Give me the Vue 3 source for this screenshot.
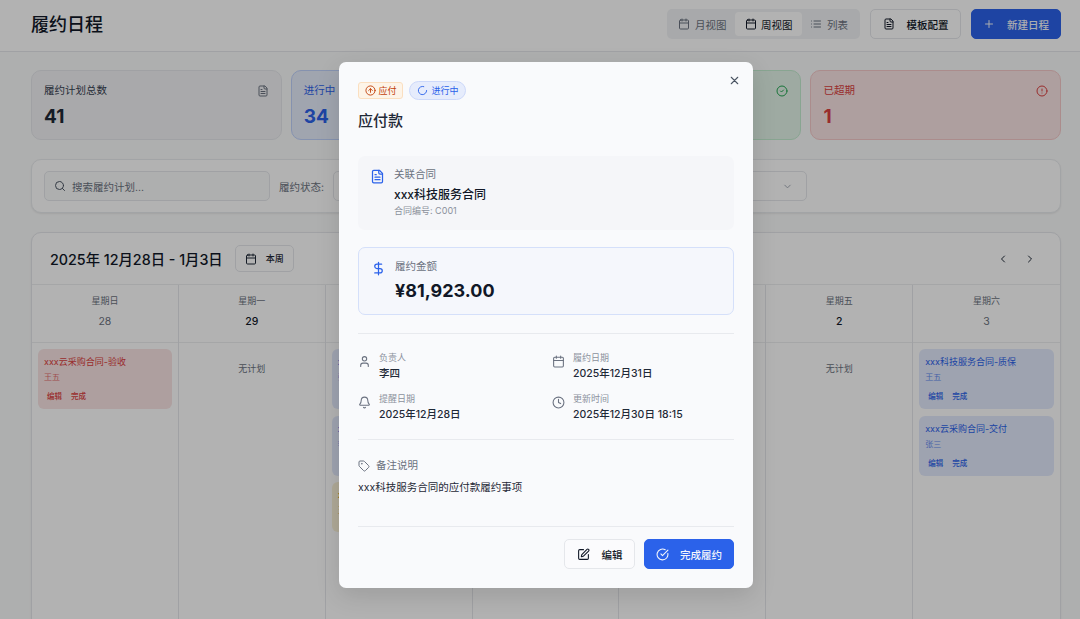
<script setup>
import { h } from 'vue'

const icons = {
  calendar: '<rect x="3" y="4" width="18" height="18" rx="2"/><path d="M16 2v4M8 2v4M3 10h18"/>',
  file: '<path d="M15 2H6a2 2 0 0 0-2 2v16a2 2 0 0 0 2 2h12a2 2 0 0 0 2-2V7Z"/><path d="M14 2v4a2 2 0 0 0 2 2h4M10 9H8M16 13H8M16 17H8"/>',
  list: '<path d="M8 6h13M8 12h13M8 18h13M3 6h.01M3 12h.01M3 18h.01"/>',
  plus: '<path d="M5 12h14M12 5v14"/>',
  search: '<circle cx="11" cy="11" r="8"/><path d="m21 21-4.3-4.3"/>',
  check: '<circle cx="12" cy="12" r="10"/><path d="m9 12 2 2 4-4"/>',
  alert: '<circle cx="12" cy="12" r="10"/><path d="M12 8v4M12 16h.01"/>',
  down: '<path d="m6 9 6 6 6-6"/>',
  left: '<path d="m15 18-6-6 6-6"/>',
  right: '<path d="m9 18 6-6-6-6"/>',
  close: '<path d="M18 6 6 18M6 6l12 12"/>',
  up: '<circle cx="12" cy="12" r="10"/><path d="m16 12-4-4-4 4M12 16V8"/>',
  loader: '<path d="M21 12a9 9 0 1 1-6.219-8.56"/>',
  dollar: '<path d="M12 2v20M17 5H9.5a3.5 3.5 0 0 0 0 7h5a3.5 3.5 0 0 1 0 7H6"/>',
  user: '<path d="M19 21v-2a4 4 0 0 0-4-4H9a4 4 0 0 0-4 4v2"/><circle cx="12" cy="7" r="4"/>',
  bell: '<path d="M10.268 21a2 2 0 0 0 3.464 0M3.262 15.326A1 1 0 0 0 4 17h16a1 1 0 0 0 .74-1.673C19.41 13.956 18 12.499 18 8A6 6 0 0 0 6 8c0 4.499-1.411 5.956-2.738 7.326"/>',
  clock: '<circle cx="12" cy="12" r="10"/><path d="M12 6v6l4 2"/>',
  tag: '<path d="M12.586 2.586A2 2 0 0 0 11.172 2H4a2 2 0 0 0-2 2v7.172a2 2 0 0 0 .586 1.414l8.704 8.704a2.426 2.426 0 0 0 3.42 0l6.58-6.58a2.426 2.426 0 0 0 0-3.42z"/><circle cx="7.5" cy="7.5" r=".5"/>',
  pen: '<path d="M12 3H5a2 2 0 0 0-2 2v14a2 2 0 0 0 2 2h14a2 2 0 0 0 2-2v-7"/><path d="M18.375 2.625a1 1 0 0 1 3 3l-9.013 9.014a2 2 0 0 1-.853.505l-2.873.84a.5.5 0 0 1-.62-.62l.84-2.873a2 2 0 0 1 .506-.852z"/>',
  done: '<path d="M21.801 10A10 10 0 1 1 17 3.335"/><path d="m9 11 3 3L22 4"/>',
}

// small inline icon, stroke follows currentColor
const Icon = (props) =>
  h('svg', {
    width: props.size || 12,
    height: props.size || 12,
    viewBox: '0 0 24 24',
    fill: 'none',
    stroke: 'currentColor',
    'stroke-width': 2,
    'stroke-linecap': 'round',
    'stroke-linejoin': 'round',
    style: { flex: 'none', display: 'block' },
    innerHTML: icons[props.name],
  })
Icon.props = ['name', 'size']

const stats = [
  { label: '履约计划总数', value: '41', icon: 'file', tone: 'gray' },
  { label: '进行中', value: '34', icon: 'loader', tone: 'blue' },
  { label: '已完成', value: '6', icon: 'check', tone: 'green' },
  { label: '已超期', value: '1', icon: 'alert', tone: 'red' },
]

const days = [
  { name: '星期日', date: '28', muted: true, events: [{ title: 'xxx云采购合同-验收', who: '王五', tone: 'red' }] },
  { name: '星期一', date: '29', events: [] },
  {
    name: '星期二',
    date: '30',
    events: [
      { title: 'xxx科技服务合同-交付', who: '张三', tone: 'blue' },
      { title: 'xxx科技服务合同-验收', who: '李四', tone: 'blue' },
      { title: 'xxx云采购合同-付款', who: '王五', tone: 'yellow' },
    ],
  },
  { name: '星期三', date: '31', events: [] },
  { name: '星期四', date: '1', events: [] },
  { name: '星期五', date: '2', events: [] },
  {
    name: '星期六',
    date: '3',
    muted: true,
    events: [
      { title: 'xxx科技服务合同-质保', who: '王五', tone: 'blue' },
      { title: 'xxx云采购合同-交付', who: '张三', tone: 'blue' },
    ],
  },
]

const infoItems = [
  { label: '负责人', value: '李四', icon: 'user' },
  { label: '履约日期', value: '2025年12月31日', icon: 'calendar' },
  { label: '提醒日期', value: '2025年12月28日', icon: 'bell' },
  { label: '更新时间', value: '2025年12月30日 18:15', icon: 'clock' },
]
</script>

<template>
  <div class="page">
    <header class="topbar">
      <h1 class="topbar__title">履约日程</h1>
      <div class="topbar__actions">
        <div class="tabs">
          <span class="tab"><Icon name="calendar" :size="12" />月视图</span>
          <span class="tab tab--active"><Icon name="calendar" :size="12" />周视图</span>
          <span class="tab tab--last"><Icon name="list" :size="12" />列表</span>
        </div>
        <button class="btn btn--template"><Icon name="file" :size="12" />模板配置</button>
        <button class="btn btn--primary btn--new"><Icon name="plus" :size="12" />新建日程</button>
      </div>
    </header>

    <main class="content">
      <section class="stats">
        <div v-for="s in stats" :key="s.label" class="stat" :class="'stat--' + s.tone">
          <div class="stat__top">
            <span>{{ s.label }}</span>
            <Icon :name="s.icon" :size="12" />
          </div>
          <div class="stat__value">{{ s.value }}</div>
        </div>
      </section>

      <section class="filters">
        <div class="search"><Icon name="search" :size="12" />搜索履约计划...</div>
        <span class="filters__label">履约状态:</span>
        <div class="select"><Icon name="down" :size="11" /></div>
      </section>

      <section class="calendar">
        <div class="calendar__head">
          <div class="calendar__range">2025年 12月28日 - 1月3日</div>
          <button class="today"><Icon name="calendar" :size="12" />本周</button>
          <div class="calendar__nav">
            <Icon name="left" :size="12" />
            <Icon name="right" :size="12" />
          </div>
        </div>
        <div class="week">
          <div v-for="d in days" :key="d.name" class="day">
            <div class="day__head">
              <div class="day__name">{{ d.name }}</div>
              <div class="day__date" :class="{ 'day__date--muted': d.muted }">{{ d.date }}</div>
            </div>
            <div class="day__body">
              <div v-if="!d.events.length" class="day__empty">无计划</div>
              <div v-for="e in d.events" :key="e.title" class="event" :class="'event--' + e.tone">
                <div class="event__title">{{ e.title }}</div>
                <div class="event__who">{{ e.who }}</div>
                <div v-if="e.tone !== 'yellow'" class="event__links"><span>编辑</span><span>完成</span></div>
              </div>
            </div>
          </div>
        </div>
      </section>
    </main>

    <div class="overlay">
      <div class="modal">
        <button class="modal__close"><Icon name="close" :size="13" /></button>
        <div class="chips">
          <span class="chip chip--orange"><Icon name="up" :size="11" />应付</span>
          <span class="chip chip--blue"><Icon name="loader" :size="11" />进行中</span>
        </div>
        <h2 class="modal__title">应付款</h2>

        <div class="contract">
          <span class="contract__icon"><Icon name="file" :size="15" /></span>
          <div>
            <div class="contract__label">关联合同</div>
            <div class="contract__name">xxx科技服务合同</div>
            <div class="contract__no">合同编号: C001</div>
          </div>
        </div>

        <div class="amount">
          <span class="amount__icon"><Icon name="dollar" :size="15" /></span>
          <div>
            <div class="amount__label">履约金额</div>
            <div class="amount__value">¥81,923.00</div>
          </div>
        </div>

        <div class="info">
          <div v-for="item in infoItems" :key="item.label" class="info__item">
            <span class="info__icon"><Icon :name="item.icon" :size="13" /></span>
            <div>
              <div class="info__label">{{ item.label }}</div>
              <div class="info__value">{{ item.value }}</div>
            </div>
          </div>
        </div>

        <div class="note">
          <div class="note__label"><Icon name="tag" :size="12" />备注说明</div>
          <div class="note__text">xxx科技服务合同的应付款履约事项</div>
        </div>

        <div class="modal__footer">
          <button class="btn btn--edit"><Icon name="pen" :size="13" />编辑</button>
          <button class="btn btn--primary btn--finish"><Icon name="done" :size="13" />完成履约</button>
        </div>
      </div>
    </div>
  </div>
</template>

<style scoped>
.page {
  position: relative;
  height: 619px;
  overflow: hidden;
  background: #fafbfb;
  font-family: Inter, "Noto Sans CJK SC", sans-serif;
  color: #111827;
}

button {
  font-family: inherit;
  cursor: pointer;
}

.topbar {
  display: flex;
  align-items: center;
  justify-content: space-between;
  height: 52px;
  padding: 0 19px 3px 31px;
  box-sizing: border-box;
  border-bottom: 1px solid #e5e7eb;
  background: #fff;
}

.topbar__title {
  margin: 2px 0 0;
  font-size: 18px;
  line-height: 24px;
  font-weight: 500;
}

.topbar__actions {
  display: flex;
  align-items: center;
  gap: 10px;
}

.tabs {
  display: flex;
  align-items: center;
  height: 30px;
  padding: 0 3px;
  box-sizing: border-box;
  border-radius: 5px;
  background: #f1f3f5;
}

.tab {
  display: flex;
  align-items: center;
  gap: 5px;
  height: 24px;
  padding: 0 8.5px 0 8px;
  box-sizing: border-box;
  border-radius: 4px;
  font-size: 10.5px;
  color: #6b7280;
}

.tab--active {
  gap: 4px;
  padding: 0 9.5px 0 10px;
  background: #fff;
  color: #111827;
}

.tab--last {
  padding-right: 9px;
}

.btn {
  display: flex;
  align-items: center;
  justify-content: center;
  height: 30px;
  padding: 0;
  border: 1px solid #e5e7eb;
  border-radius: 5px;
  background: #fff;
  font-size: 10.5px;
  font-weight: 500;
  color: #111827;
  gap: 12px;
  width: 91px;
}

.btn--new {
  width: 90px;
}

.btn--primary {
  border-color: #2b62ea;
  background: #2b62ea;
  color: #f4f6fb;
}

.content {
  display: flex;
  flex-direction: column;
  gap: 19px;
  padding: 18px 19px 0 31px;
}

.stats {
  display: grid;
  grid-template-columns: repeat(4, 1fr);
  gap: 9.3px;
}

.stat {
  height: 70px;
  box-sizing: border-box;
  padding: 13px 12px 0;
  border: 1px solid #e5e7eb;
  border-radius: 10px;
  background: #f3f4f6;
}

.stat__top {
  display: flex;
  align-items: center;
  justify-content: space-between;
  font-size: 10.5px;
  line-height: 14px;
  font-weight: 400;
  color: #374151;
}

.stat__top svg {
  color: #6b7280;
}

.stat__value {
  margin-top: 6px;
  font-size: 19px;
  line-height: 26px;
  font-weight: 700;
  color: #1f2937;
}

.stat--gray {
  background: #f3f3f5;
}

.stat--blue {
  border-color: #bfd2fb;
  background: #e6ecfb;
}

.stat--blue .stat__top,
.stat--blue .stat__top svg,
.stat--blue .stat__value {
  color: #2b62ea;
}

.stat--green {
  border-color: #c3ecd0;
  background: #e3f4e8;
}

.stat--green .stat__top,
.stat--green .stat__top svg,
.stat--green .stat__value {
  color: #22a652;
}

.stat--red {
  border-color: #f5c9c9;
  background: #f9e4e4;
}

.stat--red .stat__top,
.stat--red .stat__top svg,
.stat--red .stat__value {
  color: #dc4040;
}

.filters {
  display: flex;
  align-items: center;
  height: 54px;
  box-sizing: border-box;
  padding: 0 253px 0 12px;
  border: 1px solid #e9ebee;
  border-radius: 10px;
  background: #fff;
  box-shadow: 0 1px 2px rgba(0, 0, 0, 0.08);
}

.search {
  display: flex;
  align-items: center;
  gap: 6px;
  width: 226px;
  height: 30px;
  box-sizing: border-box;
  padding: 0 9px;
  border: 1px solid #e5e7eb;
  border-radius: 5px;
  background: #fafbfb;
  font-size: 10.5px;
  color: #6b7280;
  flex: none;
}

.search svg {
  color: #4b5563;
}

.filters__label {
  margin: 0 9px;
  font-size: 10.5px;
  color: #6b7280;
  white-space: nowrap;
}

.select {
  display: flex;
  align-items: center;
  justify-content: flex-end;
  flex: 1;
  height: 30px;
  box-sizing: border-box;
  padding-right: 13px;
  border: 1px solid #e5e7eb;
  border-radius: 5px;
  color: #9ca3af;
}

.calendar {
  height: 480px;
  flex: none;
  border: 1px solid #e5e7eb;
  border-radius: 10px;
  background: #fff;
  box-shadow: 0 1px 2px rgba(0, 0, 0, 0.08);
  overflow: hidden;
}

.calendar__head {
  display: flex;
  align-items: center;
  height: 51px;
  padding: 0 24px 0 18px;
  border-bottom: 1px solid #eceef0;
}

.calendar__range {
  font-size: 14.3px;
  font-weight: 500;
  color: #111827;
}

.today {
  display: flex;
  align-items: center;
  gap: 9px;
  width: 59px;
  height: 27px;
  box-sizing: border-box;
  margin-left: 12px;
  padding: 0 9px;
  border: 1px solid #e5e7eb;
  border-radius: 5px;
  background: #fff;
  font-size: 9px;
  font-weight: 500;
  color: #1f2937;
}

.calendar__nav {
  display: flex;
  gap: 15.5px;
  margin-left: auto;
  color: #1f2937;
}

.week {
  display: grid;
  grid-template-columns: repeat(7, 1fr);
}

.day {
  border-right: 1px solid #e5e7eb;
  min-height: 430px;
}

.day:last-child {
  border-right: none;
}

.day__head {
  height: 58px;
  box-sizing: border-box;
  padding-top: 9px;
  border-bottom: 1px solid #eceef0;
  text-align: center;
}

.day__name {
  font-size: 9px;
  line-height: 14px;
  color: #6b7280;
}

.day__date {
  margin-top: 7px;
  font-size: 10.5px;
  line-height: 14px;
  font-weight: 500;
  color: #111827;
}

.day__date--muted {
  font-weight: 400;
  color: #6b7280;
}

.day__body {
  display: flex;
  flex-direction: column;
  gap: 6.5px;
  padding: 6px;
}

.day__empty {
  padding-top: 13px;
  font-size: 9px;
  line-height: 14px;
  text-align: center;
  color: #6b7280;
}

.event {
  height: 60px;
  box-sizing: border-box;
  padding: 6px;
  border-radius: 6px;
  font-size: 9px;
  overflow: hidden;
}

.event__title {
  line-height: 13px;
  white-space: nowrap;
}

.event__who {
  margin-top: 4px;
  font-size: 8px;
  line-height: 11px;
  opacity: 0.7;
}

.event__links {
  display: flex;
  gap: 9px;
  margin-top: 8px;
  padding-left: 3px;
  font-size: 7.5px;
  line-height: 11px;
  font-weight: 500;
}

.event--red {
  background: #f9e4e4;
  color: #dc4040;
}

.event--blue {
  background: #e3eafd;
  color: #2b62ea;
}

.event--yellow {
  height: 50px;
  background: #fbf3d9;
  color: #ca8a04;
}

.overlay {
  position: absolute;
  inset: 0;
  display: flex;
  align-items: flex-start;
  justify-content: center;
  padding: 62px 0 0 12px;
  box-sizing: border-box;
  background: rgba(0, 0, 0, 0.3);
}

.modal {
  position: relative;
  display: flex;
  flex-direction: column;
  width: 414px;
  height: 526px;
  box-sizing: border-box;
  padding: 19px;
  border-radius: 7px;
  background: #f9fafc;
  box-shadow: 0 8px 24px rgba(0, 0, 0, 0.12);
}

.modal__close {
  position: absolute;
  top: 11.5px;
  right: 12.5px;
  padding: 0;
  border: none;
  background: none;
  color: #4b5563;
}

.chips {
  display: flex;
  align-items: center;
  gap: 6px;
  height: 18px;
}

.chip {
  display: flex;
  align-items: center;
  gap: 3px;
  box-sizing: border-box;
  font-size: 9px;
  line-height: 1;
}

.chip--orange {
  height: 17px;
  padding: 0 5.5px;
  border: 1px solid #fbdfc0;
  border-radius: 3px;
  background: #fdf4e8;
  color: #c2410c;
}

.chip--blue {
  height: 19px;
  padding: 0 6.5px;
  gap: 4px;
  border: 1px solid #cdd9fa;
  border-radius: 10px;
  background: #e6ecfc;
  color: #2b62ea;
}

.modal__title {
  margin: 12px 0 0;
  font-size: 15px;
  line-height: 20px;
  font-weight: 500;
  color: #1f2937;
}

.contract {
  display: flex;
  gap: 9px;
  height: 74px;
  box-sizing: border-box;
  margin-top: 25px;
  padding: 12px 12px 0;
  border-radius: 7px;
  background: #f5f6f9;
}

.contract__icon,
.amount__icon {
  color: #2b62ea;
  padding-top: 1px;
}

.contract__label,
.amount__label {
  font-size: 10.5px;
  line-height: 14px;
  color: #6b7280;
}

.contract__name {
  margin-top: 5px;
  font-size: 12px;
  line-height: 16px;
  font-weight: 500;
  color: #111827;
}

.contract__no {
  margin-top: 2px;
  font-size: 9px;
  line-height: 12px;
  color: #8b919c;
}

.amount {
  display: flex;
  gap: 9px;
  height: 68px;
  box-sizing: border-box;
  margin-top: 17px;
  padding: 12px 12px 0;
  border: 1px solid #d5e0fa;
  border-radius: 7px;
  background: #f5f7fc;
}

.amount__value {
  margin-top: 4px;
  font-size: 18px;
  line-height: 26px;
  font-weight: 700;
  color: #111827;
}

.info {
  display: grid;
  grid-template-columns: 1fr 1fr;
  gap: 12px 12px;
  margin-top: 18px;
  padding: 18px 0 17px;
  border-top: 1px solid #e8eaee;
  border-bottom: 1px solid #e8eaee;
}

.info__item {
  display: flex;
  gap: 8px;
}

.info__icon {
  padding-top: 3px;
  color: #6b7280;
}

.info__label {
  font-size: 9px;
  line-height: 12px;
  color: #8b919c;
}

.info__value {
  margin-top: 3px;
  font-size: 10.5px;
  line-height: 14px;
  font-weight: 500;
  color: #1f2937;
}

.note {
  flex: 1;
  padding-top: 19px;
  border-bottom: 1px solid #e8eaee;
}

.note__label {
  display: flex;
  align-items: center;
  gap: 6px;
  font-size: 10.5px;
  line-height: 14px;
  color: #6b7280;
}

.note__text {
  margin-top: 8px;
  font-size: 10.5px;
  line-height: 14px;
  color: #1f2937;
}

.modal__footer {
  display: flex;
  justify-content: flex-end;
  gap: 9px;
  margin-top: 12px;
}

.btn--edit {
  width: 71px;
  background: #fbfbfd;
}

.btn--finish {
  width: 90px;
  gap: 11px;
}
</style>

<style>
html, body {
  margin: 0;
  overflow: hidden;
}
</style>
